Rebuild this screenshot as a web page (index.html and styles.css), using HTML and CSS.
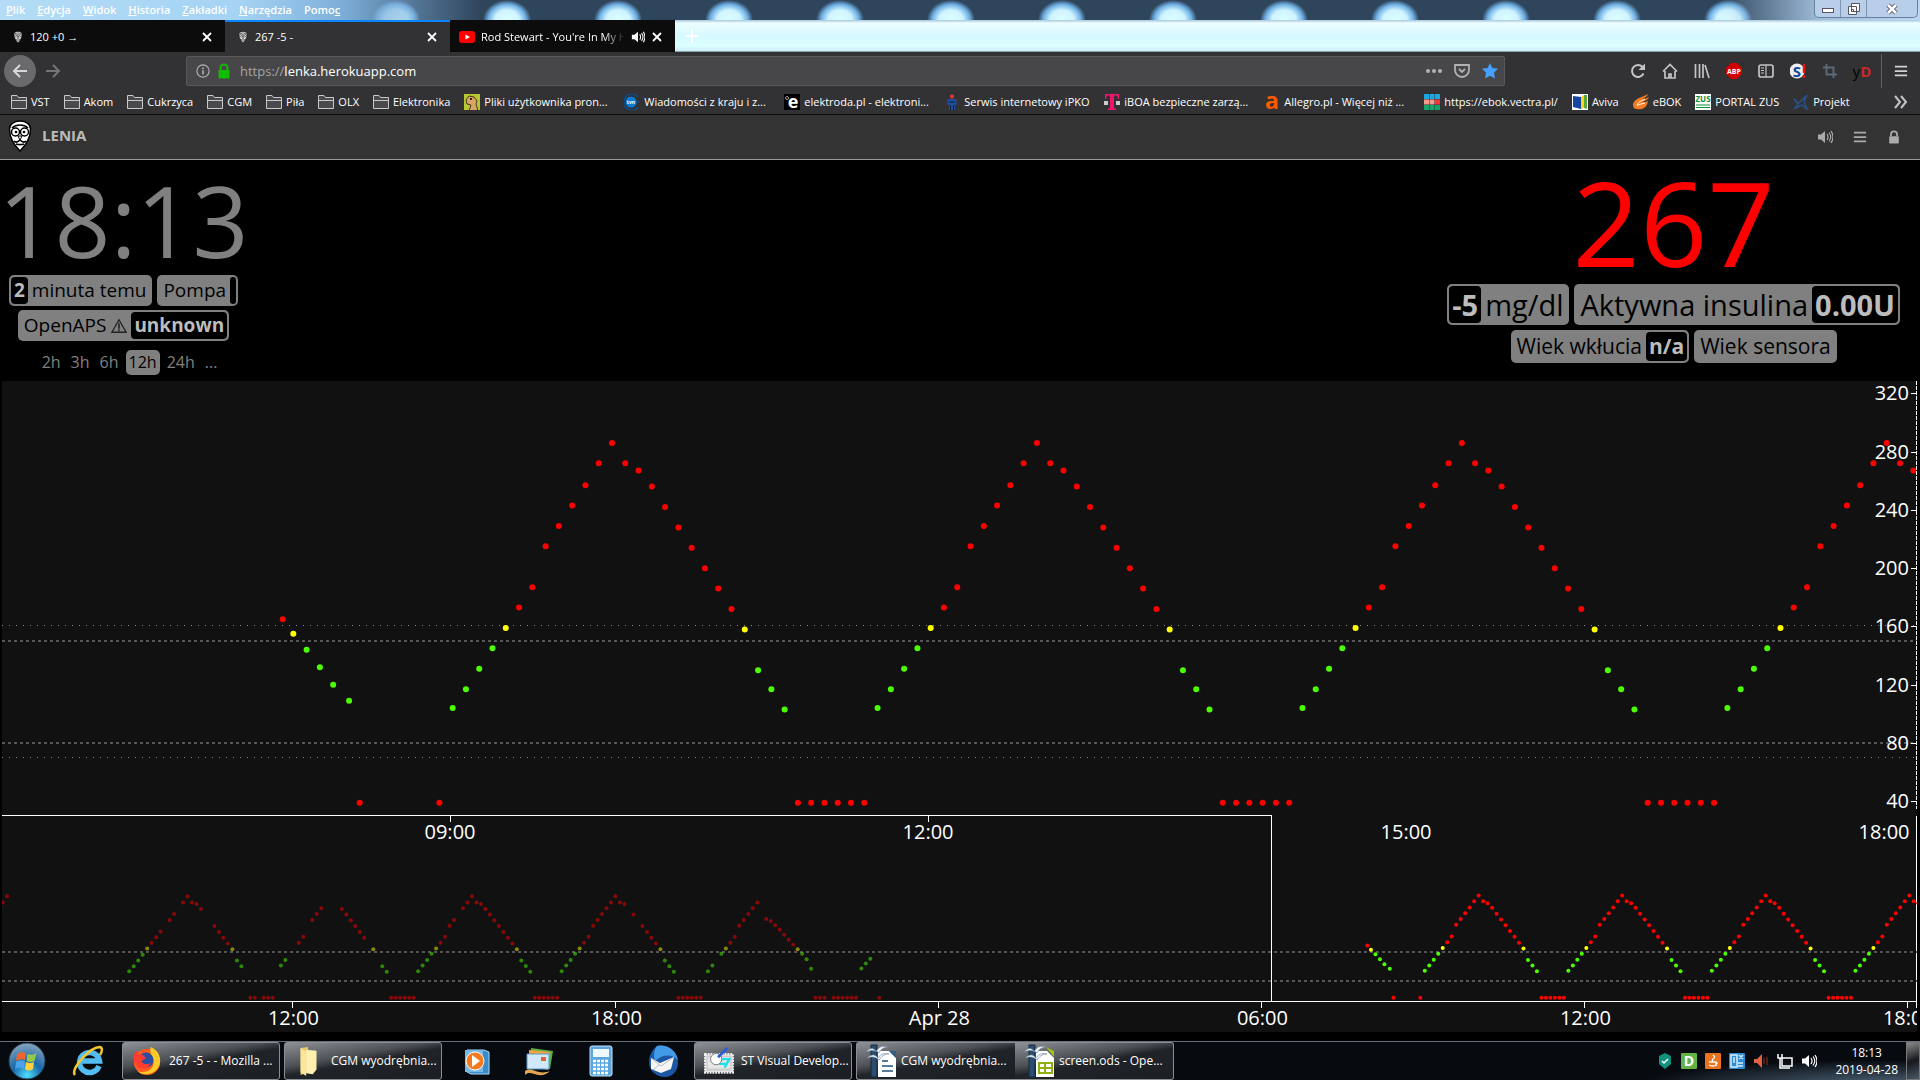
FILE: index.html
```html
<!DOCTYPE html>
<html lang="pl">
<head>
<meta charset="utf-8">
<title>267 -5 -</title>
<link rel="stylesheet" href="styles.css">
</head>
<body>
<svg class="defs" aria-hidden="true">
  <symbol id="folder" viewBox="0 0 16 16"><path d="M.5 14.500V1.500H6l1.500 2h8v11z" fill="#4a4a4e" stroke="#c8c8c8"/><path d="M.5 6.500h15" stroke="#c8c8c8"/></symbol>
  <symbol id="owl" viewBox="0 0 24 32"><path d="M12 1C5.500 1 1.500 4.500 1.500 9c0 8 3.500 15 10.500 22 7-7 10.500-14 10.500-22C22.500 4.500 18.500 1 12 1z" fill="#fff" stroke="#000" stroke-width="1.500"/><path d="M4 8c4-4 12-4 16 0M6 21c2 2 4 1 6-1 2 2 4 3 6 1M8 24c3 1 5 1 8 0" fill="none" stroke="#000" stroke-width="1.600"/><circle cx="7.500" cy="12" r="4" fill="#fff" stroke="#000" stroke-width="1.500"/><circle cx="16.500" cy="12" r="4" fill="#fff" stroke="#000" stroke-width="1.500"/><circle cx="8" cy="12" r="1.300"/><circle cx="16" cy="12" r="1.300"/><path d="M10 16l2 4 2-4z" fill="#fff" stroke="#000"/></symbol>
  <symbol id="close" viewBox="0 0 12 12"><path d="M2 2l8 8M10 2l-8 8" stroke="#fff" stroke-width="1.800"/></symbol>
  <symbol id="sound" viewBox="0 0 16 16"><path d="M1 5.500h3L8 2v12l-4-3.500H1z" fill="currentColor"/><path d="M10 5q2 3 0 6M12 3.500q3.500 4.500 0 9M14 2q4 6 0 12" fill="none" stroke="currentColor" stroke-width="1.200"/></symbol>
  <symbol id="bars" viewBox="0 0 16 16"><path d="M1 3h14M1 8h14M1 13h14" stroke="currentColor" stroke-width="2"/></symbol>
  <symbol id="lock" viewBox="0 0 16 16"><path d="M4.500 7V5a3.500 3.500 0 017 0v2" fill="none" stroke="currentColor" stroke-width="2"/><rect x="2.500" y="7" width="11" height="8.500" rx="1" fill="currentColor"/></symbol>
  <symbol id="office" viewBox="0 0 34 36"><path d="M6 2h6v32H6z" fill="#2c4d70" stroke="#15283c"/><path d="M13 8h11l7 7v19H13z" fill="#fff"/><path d="M1 9c5-6 9-3 10 0 3-7 9-6 12-5-4 0-7 2-9 6-3-3-8-3-13-1zM2 15c5-5 9-3 11 0 3-5 8-5 11-4-5 0-8 3-10 6-3-3-7-4-12-2z" fill="#eef4fa" stroke="#68829b" stroke-width=".6"/></symbol>
</svg>

<header class="titlebar">
  <nav class="menu">
    <button><u>P</u>lik</button><button><u>E</u>dycja</button><button><u>W</u>idok</button><button><u>H</u>istoria</button><button><u>Z</u>akładki</button><button><u>N</u>arzędzia</button><button>Pomo<u>c</u></button>
  </nav>
  <div class="window-buttons">
    <button aria-label="Minimalizuj"><svg width="14" height="10"><rect x="1.500" y="4.500" width="11" height="4" fill="#fff" stroke="#556"/></svg></button>
    <button aria-label="Przywróć"><svg width="14" height="14"><path d="M4.500 1.500h8v8h-8zM1.500 4.500h8v8h-8z" fill="#fff" stroke="#556"/><path d="M4.500 7.500h2v2h-2z" fill="none" stroke="#556"/></svg></button>
    <button class="wide" aria-label="Zamknij"><svg width="14" height="12"><path d="M3 2l8 8M11 2l-8 8" stroke="#556" stroke-width="4.500"/><path d="M3 2l8 8M11 2l-8 8" stroke="#fff" stroke-width="2.500"/></svg></button>
  </div>
</header>

<div class="tabs">
  <div class="tab"><svg class="i12"><use href="#owl"/></svg><span>120 +0 →</span><button aria-label="Zamknij kartę"><svg class="i12"><use href="#close"/></svg></button></div>
  <div class="tab active"><svg class="i12"><use href="#owl"/></svg><span>267 -5 -</span><button aria-label="Zamknij kartę"><svg class="i12"><use href="#close"/></svg></button></div>
  <div class="tab media"><svg class="i16" viewBox="0 0 16 16"><rect y="2" width="16" height="12" rx="3" fill="#f00"/><path d="M6.500 5.500v5L11 8z" fill="#fff"/></svg><span class="fade">Rod Stewart - You're In My Heart</span><svg class="i14"><use href="#sound"/></svg><button aria-label="Zamknij kartę"><svg class="i12"><use href="#close"/></svg></button></div>
  <button class="newtab" aria-label="Nowa karta"><svg width="14" height="14"><path d="M7 0v14M0 7h14" stroke="#fff" stroke-width="2"/></svg></button>
</div>

<div class="toolbar">
  <button class="back" aria-label="Wstecz"><svg class="i16" viewBox="0 0 16 16"><path d="M15 8H2M8 2L2 8l6 6" fill="none" stroke="#d8d8d8" stroke-width="2"/></svg></button>
  <button class="forward" aria-label="Dalej"><svg class="i16" viewBox="0 0 16 16"><path d="M1 8h13M8 2l6 6-6 6" fill="none" stroke="#747476" stroke-width="2"/></svg></button>
  <div class="urlbar">
    <svg class="i14" viewBox="0 0 16 16"><circle cx="8" cy="8" r="7" fill="none" stroke="#b1b1b3" stroke-width="1.300"/><path d="M8 7v5M8 4v2" stroke="#b1b1b3" stroke-width="1.800"/></svg>
    <svg class="i16 green"><use href="#lock"/></svg>
    <label for="url">https://</label><input id="url" value="lenka.herokuapp.com">
    <svg class="i16" viewBox="0 0 16 16"><g fill="#b1b1b3"><circle cx="2" cy="8" r="2"/><circle cx="8" cy="8" r="2"/><circle cx="14" cy="8" r="2"/></g></svg>
    <svg class="i16" viewBox="0 0 16 16"><path d="M1 2h14v5a7 7 0 01-14 0zM5 6l3 3 3-3" fill="none" stroke="#b1b1b3" stroke-width="1.800"/></svg>
    <svg class="i16" viewBox="0 0 16 16"><path d="M8 0l2.400 5 5.600.7-4 3.900 1 5.900-5-2.800-5 2.800 1-5.900-4-3.900L5.600 5z" fill="#45a1ff"/></svg>
  </div>
  <div class="tools">
    <button aria-label="Odśwież"><svg class="i16" viewBox="0 0 16 16"><path d="M13.500 10.500A6 6 0 1112.500 4" fill="none" stroke="#c4c4c6" stroke-width="2"/><path d="M15 .5V7H8.500z" fill="#c4c4c6"/></svg></button>
    <button aria-label="Strona domowa"><svg class="i16" viewBox="0 0 16 16"><path d="M1 8.500L8 1.500l7 7M3 8v7h10V8M7 15v-4h2v4" fill="none" stroke="#c4c4c6" stroke-width="1.700"/></svg></button>
    <button aria-label="Biblioteka"><svg class="i16" viewBox="0 0 16 16"><path d="M1.500 1v14M5.500 1v14M9 1v14M11 2l4 13" stroke="#c4c4c6" stroke-width="1.700"/></svg></button>
    <button aria-label="AdBlock"><svg class="i16" viewBox="0 0 16 16"><path d="M5 0h6l5 5v6l-5 5H5l-5-5V5z" fill="#d00000"/><text x="8" y="11" font-size="7" font-weight="700" text-anchor="middle" fill="#fff">ABP</text></svg></button>
    <button aria-label="Panel boczny"><svg class="i16" viewBox="0 0 16 16"><rect x="1" y="2" width="14" height="12" rx="2" fill="none" stroke="#c4c4c6" stroke-width="1.700"/><path d="M8 2v12M3 5h3M3 7.500h3M3 10h3" stroke="#c4c4c6" stroke-width="1.200"/></svg></button>
    <button aria-label="Dodatek S"><svg class="i16" viewBox="0 0 16 16"><circle cx="7" cy="8" r="7.500" fill="#eee"/><text x="7" y="13.500" font-size="15" font-weight="700" text-anchor="middle" fill="#12459b">S</text><path d="M14 1v9M14 12v3" stroke="#e11" stroke-width="2.500"/></svg></button>
    <button aria-label="Przytnij"><svg class="i14" viewBox="0 0 16 16"><path d="M4 0v12h12M0 4h12v12" fill="none" stroke="#5b6b7a" stroke-width="2.200"/></svg></button>
    <button class="yd" aria-label="yD">y<b>D</b></button>
    <button class="main-menu" aria-label="Menu"><svg class="i14"><use href="#bars"/></svg></button>
  </div>
</div>

<nav class="bookmarks">
  <a href="#"><svg class="i16"><use href="#folder"/></svg>VST</a>
  <a href="#"><svg class="i16"><use href="#folder"/></svg>Akom</a>
  <a href="#"><svg class="i16"><use href="#folder"/></svg>Cukrzyca</a>
  <a href="#"><svg class="i16"><use href="#folder"/></svg>CGM</a>
  <a href="#"><svg class="i16"><use href="#folder"/></svg>Piła</a>
  <a href="#"><svg class="i16"><use href="#folder"/></svg>OLX</a>
  <a href="#"><svg class="i16"><use href="#folder"/></svg>Elektronika</a>
  <a href="#" class="long"><svg class="i16" viewBox="0 0 16 16"><rect width="16" height="16" fill="#b5c832"/><path d="M2 6l3-4 5 1 3 4-1 3 2 7H5l2-6-4-1z" fill="#d9a566" stroke="#4b3417"/><circle cx="7" cy="5" r="1"/></svg>Pliki użytkownika pron...</a>
  <a href="#" class="long"><svg class="i16" viewBox="0 0 16 16"><path d="M14 3a8 8 0 100 10M12 8h4" fill="none" stroke="#0a4d8c" stroke-width="1.500"/><circle cx="7" cy="8" r="5.500" fill="#0b7ad1"/><text x="7" y="10" font-size="5" font-weight="700" text-anchor="middle" fill="#fff">tvn</text></svg>Wiadomości z kraju i z...</a>
  <a href="#" class="long"><svg class="i16" viewBox="0 0 16 16"><rect width="16" height="16"/><text x="9" y="14" font-size="18" font-weight="700" text-anchor="middle" fill="#fff">e</text><circle cx="3" cy="4" r="1.500" fill="none" stroke="#999"/></svg>elektroda.pl - elektroni...</a>
  <a href="#" class="long"><svg class="i16" viewBox="0 0 16 16"><circle cx="8" cy="2.500" r="2" fill="#e33"/><path d="M4 5h8l1 5-2 1v5H5v-5l-2-1z" fill="#1d4f9e"/><path d="M6.500 11v5M9.500 11v5M5 8h6" stroke="#0c1f44"/></svg>Serwis internetowy iPKO</a>
  <a href="#" class="long"><svg class="i16" viewBox="0 0 16 16"><path d="M1 0h14v5h-1l-1-3.500h-3V14l2 1v1H4v-1l2-1V1.500H3L2 5H1z" fill="#f0146e"/><path d="M0 7h4v4H0zM12 7h4v4h-4z" fill="#ccc"/></svg>iBOA bezpieczne zarzą...</a>
  <a href="#" class="long"><svg class="i16" viewBox="0 0 16 16"><text x="8" y="15" font-size="23" font-weight="700" text-anchor="middle" fill="#ff5a00">a</text></svg>Allegro.pl - Więcej niż ...</a>
  <a href="#"><svg class="i16" viewBox="0 0 16 16"><path d="M0 0h5v5H0zM5.500 0h5v5h-5zM11 0h5v5h-5z" fill="#1aa7e0"/><path d="M0 5.500h5v5H0zM5.500 5.500h5v5h-5z" fill="#f4998d"/><path d="M11 5.500h5v5h-5z" fill="#f33"/><path d="M0 11h5v5H0zM5.500 11h5v5h-5zM11 11h5v5h-5z" fill="#14a36b"/></svg>https://ebok.vectra.pl/</a>
  <a href="#"><svg class="i16" viewBox="0 0 16 16"><rect width="16" height="16" fill="#fff"/><path d="M1 2l8 1v12l-8-2z" fill="#1546a0"/><path d="M9 3l3-2v13l-3 1z" fill="#ffd51c"/><path d="M12 1h3v14l-3-1z" fill="#5ba83c"/></svg>Aviva</a>
  <a href="#"><svg class="i16" viewBox="0 0 16 16"><path d="M0 10C2 4 8 4 15 0c-1 3-4 4-6 5 3 0 5-1 7-2-1 3-4 4-7 5 2 0 4 0 6-1-1 7-6 9-11 8-3 0-4-2-4-5z" fill="#f47b20"/><path d="M4 11c2-4 5-4 8-6M4 12c2-2 5-2 8-3" stroke="#fff" fill="none"/></svg>eBOK</a>
  <a href="#"><svg class="i16" viewBox="0 0 16 16"><rect width="16" height="16" fill="#fff"/><text x="8" y="8" font-size="8" font-weight="700" text-anchor="middle" fill="#0a8f3a">ZUS</text><path d="M1 11h14M1 13.500h14" stroke="#0a8f3a"/></svg>PORTAL ZUS</a>
  <a href="#"><svg class="i16" viewBox="0 0 16 16"><path d="M1 5l4 4 3-2 6-6-3 6 3 8-5-4-7 3 3-4z" fill="none" stroke="#27528c" stroke-width="1.500"/></svg>Projekt</a>
  <button class="overflow" aria-label="Więcej zakładek"><svg class="i14" viewBox="0 0 14 14"><path d="M1 1l5 6-5 6M7 1l5 6-5 6" fill="none" stroke="#c4c4c6" stroke-width="2"/></svg></button>
</nav>

<div class="site-header">
  <svg class="logo"><use href="#owl"/></svg>
  <h1>LENIA</h1>
  <div class="site-tools">
    <button aria-label="Alarm"><svg class="i16"><use href="#sound"/></svg></button>
    <button aria-label="Ustawienia"><svg class="i14"><use href="#bars"/></svg></button>
    <button aria-label="Logowanie"><svg class="i14"><use href="#lock"/></svg></button>
  </div>
</div>

<main>
  <section class="status">
    <div class="left">
      <div class="clock">18:13</div>
      <div class="row"><span class="pill"><b>2</b><i>minuta temu</i></span><span class="pill"><i>Pompa</i><b class="empty"></b></span></div>
      <div class="row"><span class="pill"><i>OpenAPS <svg class="i16" viewBox="0 0 18 16"><path d="M9 1l8 14H1z" fill="none" stroke="#222" stroke-width="1.500"/><path d="M9 5v6M9 12v2" stroke="#222" stroke-width="1.800"/></svg></i><b>unknown</b></span></div>
      <div class="hours"><button>2h</button><button>3h</button><button>6h</button><button class="selected">12h</button><button>24h</button><button>...</button></div>
    </div>
    <div class="right">
      <div class="bg">267</div>
      <div class="row big"><span class="pill"><b>-5</b><i>mg/dl</i></span><span class="pill"><i>Aktywna insulina</i><b>0.00U</b></span></div>
      <div class="row mid"><span class="pill"><i>Wiek wkłucia</i><b>n/a</b></span><span class="pill"><i>Wiek sensora</i></span></div>
    </div>
  </section>
  <svg id="chart" class="chart" role="img" aria-label="Wykres glikemii"></svg>
</main>

<footer class="taskbar">
  <button class="orb" aria-label="Start"><svg viewBox="0 0 38 38"><defs><radialGradient id="orb" cx=".5" cy=".9" r=".9"><stop offset="0" stop-color="#4fe0ff"/><stop offset=".45" stop-color="#1768a8"/><stop offset="1" stop-color="#8aa5bd"/></radialGradient></defs><circle cx="19" cy="19" r="18" fill="url(#orb)" stroke="#25384c"/><path d="M9 12q4-3 9-1l-1 7q-5-2-9 1z" fill="#f0652f"/><path d="M19.500 12q5 2 9-1l-2 8q-4 2-8 0z" fill="#94c94a"/><path d="M8 20q4-3 9-1l-1 8q-4-3-9 0z" fill="#4aa3e8"/><path d="M18 20q4 2 8 0l-1 7q-4 3-8 0z" fill="#ffd23c"/></svg></button>
  <button class="launch ie" aria-label="Internet Explorer"><svg viewBox="0 0 32 32"><path d="M27 21a10 10 0 11.500-5H8" fill="none" stroke="#52bdf3" stroke-width="5.500"/><path d="M3 30C-2 24 18 2 28 2c3 1 2 5 0 8" fill="none" stroke="#f6c62a" stroke-width="2.500"/></svg></button>
  <button class="task"><svg viewBox="0 0 32 32"><circle cx="16" cy="17" r="14" fill="#ff5a1f"/><path d="M20 1c9 4 12 13 9 20-4 9-16 12-23 6 10 3 18-3 17-11-1-6-5-8-3-15z" fill="#ffc928"/><circle cx="15" cy="15" r="8" fill="#2b4ea0"/><path d="M2 9l3-4 2 4c4-1 6 2 8 4l-5 3c2 4 7 4 10 2-2 6-10 8-15 3C2 18 1 13 2 9z" fill="#ff3d2e"/></svg><span>267 -5 - - Mozilla ...</span></button>
  <button class="task"><svg viewBox="0 0 32 32"><path d="M7 2l8-1v27l-8 3z" fill="#e9c865"/><path d="M13 4l11 1v20l-4 5-7-1z" fill="#fff0b0"/><path d="M7 2l6 4v26l-6-4z" fill="#f8e5a0"/></svg><span>CGM wyodrębnia...</span></button>
  <button class="launch" aria-label="Media Player"><svg viewBox="0 0 32 32"><path d="M6 5h17l5 2v22H10l-4-2z" fill="#3c8bc9" stroke="#a9dbff"/><path d="M4 5h18v22H4z" fill="#78b8e5"/><circle cx="14" cy="16" r="9" fill="#f47a1c" stroke="#fff"/><path d="M11 10v12l8-6z" fill="#fff"/></svg></button>
  <button class="launch" aria-label="Poczta"><svg viewBox="0 0 32 32"><path d="M8 3l22 3-3 18-20-4z" fill="#5dae45"/><path d="M6 5l21 2-2 18-19-4z" fill="#f4a343"/><path d="M4 9h22v15H4z" fill="#cfe9fa" stroke="#5499cb"/><path d="M18 12h5v4h-5z" fill="#d63"/><path d="M2 26c8-5 12 5 25 0-6 6-12 4-16 3-3-1-6-2-9 1z" fill="#e3a552"/></svg></button>
  <button class="launch" aria-label="Kalkulator"><svg viewBox="0 0 32 32"><rect x="5" y="1" width="22" height="30" rx="2" fill="#5da6dc" stroke="#c6e7ff"/><rect x="8" y="4" width="16" height="8" fill="#eef8ff"/><path d="M8 16h16M8 20h16M8 24h16M8 28h16" stroke="#fff" stroke-width="2.500" stroke-dasharray="3 1"/></svg></button>
  <button class="launch" aria-label="Thunderbird"><svg viewBox="0 0 32 32"><path d="M10 1c12-2 21 6 21 17 0 8-6 14-13 14C8 32 2 25 2 17 2 10 5 5 10 1z" fill="#1c57a5"/><path d="M10 1c10-2 19 4 21 14-6-6-15-6-23 1-2-5-1-11 2-15z" fill="#419be6"/><path d="M4 13l9 5 14-6-3 12-10 4-10-4z" fill="#f5f5f2"/><path d="M4 13l10 8 13-9M12 20l-6 5" stroke="#b6bec8" fill="none"/></svg></button>
  <button class="task"><svg viewBox="0 0 32 32"><path d="M1 9h30v19H1z" fill="#ccc" stroke="#eee" stroke-width="3" stroke-dasharray="2 1"/><path d="M4 12h24v12H4z" fill="#e6e6e6"/><path d="M18 14h9l-5 9M16 19h8" stroke="#1de0e8" stroke-width="2.500" fill="none"/><circle cx="13" cy="14" r="6" fill="#fff" stroke="#777"/><path d="M15 12L25 2" stroke="#2a5ce0" stroke-width="3"/></svg><span>ST Visual Develop...</span></button>
  <div class="group">
    <button class="task"><svg viewBox="0 0 34 36"><use href="#office"/><path d="M17 18h6M17 23h11M17 28h11" stroke="#547d9d" stroke-width="2"/><path d="M24 8l7 7V8z" fill="#315c83"/></svg><span>CGM wyodrębnia...</span></button>
    <button class="task"><svg viewBox="0 0 34 36"><use href="#office"/><path d="M16 20h13v10H16zM16 25h13M22 20v10" fill="none" stroke="#8fae10" stroke-width="2"/><path d="M23 4l8 10V8z" fill="#a2c410"/></svg><span>screen.ods - Ope...</span></button>
  </div>
  <div class="tray">
    <svg class="i16" viewBox="0 0 16 16"><path d="M8 0l6 3v8l-6 5-6-5V3z" fill="#12917e"/><path d="M5 8l2 2 4-4" fill="none" stroke="#fff" stroke-width="1.500"/></svg>
    <svg class="i16" viewBox="0 0 16 16"><rect width="16" height="16" rx="1" fill="#62b246"/><text x="8" y="13" font-size="14" font-weight="700" text-anchor="middle" fill="#fff">D</text></svg>
    <svg class="i16" viewBox="0 0 16 16"><rect width="16" height="16" rx="1" fill="#e9731e"/><path d="M8 2q3 2 0 4q-2 2 1 3M4 9h7q3 2-1 2M4 12q4 2 8 0" fill="none" stroke="#fff" stroke-width="1.300"/></svg>
    <svg class="i16" viewBox="0 0 16 16"><rect width="16" height="16" rx="1" fill="#2c8bd5"/><path d="M2 2h6v12H2zM10 2l4 4M14 2l-4 4M5 4v6M9 10h5M9 13h5" fill="none" stroke="#d5efff" stroke-width="1.500"/></svg>
    <svg class="i16" viewBox="0 0 16 16"><path d="M1 6h3l5-5v14l-5-5H1z" fill="#e06042"/><path d="M11 5v6M14 4v8" stroke="#69261c" stroke-width="1.500"/></svg>
    <svg class="i16" viewBox="0 0 16 16"><path d="M5 5h10v8H5zM7 15h6M1 1v4h4V1M3 5v10h4" fill="none" stroke="#fff" stroke-width="1.500"/></svg>
    <svg class="i16 white"><use href="#sound"/></svg>
    <time>18:13<br>2019-04-28</time>
  </div>
  <button class="desktop" aria-label="Pokaż pulpit"></button>
</footer>
<script src="chart.js"></script>
</body>
</html>
```

FILE: styles.css
```css
* { box-sizing: border-box; }
body {
  margin: 0;
  min-height: 100vh;
  display: flex;
  flex-direction: column;
  background: #000;
  color: #fff;
  font: 12px/16px "Open Sans", "Noto Sans", sans-serif;
}
button { margin: 0; padding: 0; border: 0; background: none; color: inherit; font: inherit; display: flex; align-items: center; justify-content: center; }
a { color: inherit; text-decoration: none; }
svg { flex: none; }
.defs { position: absolute; width: 0; height: 0; }
.i12 { width: 12px; height: 12px; }
.i14 { width: 14px; height: 14px; }
.i16 { width: 16px; height: 16px; }
.green { color: #12bc00; }
.white { color: #fff; }

.titlebar {
  height: 20px;
  display: flex;
  justify-content: space-between;
  background:
    linear-gradient(90deg, #b4dcf6 0, #a5d3f4 240px, #7fb0da 340px, rgba(60,90,120,0) 480px),
    linear-gradient(270deg, #bcd7f3 0, #9fbcd9 100px, rgba(60,90,120,0) 200px),
    radial-gradient(ellipse 24px 20px at 56px 20px, #dff 0, #cff4ff 50%, #6fb0e4 78%, rgba(47,69,92,0) 100%) 7px 0 / 111px 20px,
    #2f455c;
}
.menu { display: flex; gap: 12px; padding: 0 6px; font-size: 11px; font-weight: 600; text-shadow: 0 0 4px #fff; }
.window-buttons { display: flex; width: 104px; height: 18px; margin-right: 2px; background: #b9cfe9; border: 1px solid #67809b; border-top: 0; border-radius: 0 0 5px 5px; }
.window-buttons button { flex: 1; border-right: 1px solid #7e98b4; }
.window-buttons .wide { flex: 2; border: 0; }

.tabs { height: 32px; display: flex; background: linear-gradient(#a9c6dc 0, #ecfeff 3px, #d6f9ff 16px, #dcffff 26px, #cfeef5); border-bottom: 1px solid #8aa4ab; }
.tab { width: 225px; height: 32px; display: flex; align-items: center; gap: 6px; padding: 2px 12px 0; background: #0c0c0d; font-size: 11px; }
.tab span { flex: 1; white-space: nowrap; overflow: hidden; }
.tab.active { background: #323234; border-top: 2px solid #0a84ff; padding-top: 0; }
.tab.media { padding: 2px 12px 0 9px; }
.fade { -webkit-mask-image: linear-gradient(90deg, #000 85%, transparent); mask-image: linear-gradient(90deg, #000 85%, transparent); }
.newtab { width: 34px; }

.toolbar { height: 38px; display: flex; align-items: center; background: #323234; padding-left: 4px; }
.back { width: 32px; height: 32px; border-radius: 50%; background: #6a6a6c; }
.forward { width: 34px; }
.urlbar { flex: 1; height: 30px; margin-left: 116px; display: flex; align-items: center; gap: 12px; padding: 0 6px 0 9px; background: #474749; border: 1px solid #59595c; border-radius: 2px; font-size: 13px; }
.urlbar .green { margin: 0 -4px 0 -6px; }
.urlbar label { color: #a4a4a8; margin-right: -12px; }
.urlbar input { flex: 1; padding: 0; border: 0; background: none; color: #fff; font: inherit; outline: none; }
.tools { display: flex; margin-left: 117px; height: 34px; }
.tools button { width: 32px; }
.tools .main-menu { width: 39px; margin-left: 3px; border-left: 1px solid #606063; color: #d0d0d2; }
.tools .yd { font-size: 15px; color: #000; }
.yd b { color: #c62828; }

.bookmarks { height: 25px; display: flex; align-items: center; gap: 14px; padding: 0 12px 0 11px; background: #323234; border-bottom: 1px solid #0c0c0d; font-size: 11px; }
.bookmarks a { display: flex; align-items: center; gap: 4px; white-space: nowrap; }
.bookmarks .long { width: 146px; }
.overflow { margin-left: auto; }

.site-header { height: 45px; display: flex; align-items: center; gap: 10px; padding: 0 19px 0 8px; background: #333; border-bottom: 1px solid #999; color: #bbb; }
.logo { width: 24px; height: 32px; margin-bottom: 2px; }
h1 { margin: 0 0 4px; font-size: 15px; line-height: 20px; font-weight: 700; }
.site-tools { margin-left: auto; display: flex; gap: 20px; color: #aaa; }

main { flex: 1; display: flex; flex-direction: column; padding: 0 3px 9px 2px; }
.status { height: 221px; display: flex; justify-content: space-between; color: #808080; }
.left { width: 243px; padding: 10px 0 0; display: flex; flex-direction: column; align-items: center; gap: 4px; }
.clock { font-size: 98px; line-height: 101px; }
.row { display: flex; gap: 5px; font-size: 19px; line-height: 27px; white-space: nowrap; }
.pill { display: flex; padding: 2px; background: #808080; border-radius: 5px; }
.pill i { font-style: normal; color: #000; padding: 0 4px; }
.pill svg { vertical-align: -2px; }
.pill b { background: #000; color: #bdbdbd; border-radius: 4px; padding: 0 3px; font-weight: 700; }
.pill .empty { width: 6px; padding: 0; }
.hours { display: flex; gap: 4px; margin: 5px 0 0 12px; font-size: 16px; line-height: 25px; }
.hours button { padding: 0 3px; }
.hours .selected { background: #808080; color: #000; border-radius: 5px; }
.right { padding: 4px 17px 0 0; display: flex; flex-direction: column; align-items: center; gap: 5px; }
.bg { font-size: 118px; line-height: 115px; color: #f00; }
.row.big { font-size: 29px; line-height: 37px; }
.row.mid { font-size: 21px; line-height: 29px; }

.chart { flex: 1 1 0; min-height: 400px; width: 100%; background: #111; overflow: hidden; font-size: 20px; fill: #fff; }
.axis { stroke: #fff; fill: none; }
.tick { stroke: #fff; }
.target { stroke: #555; stroke-width: 2; stroke-dasharray: 3 3; }
.limit { stroke: #888; stroke-dasharray: 1 6; }
.brush { fill: #111; stroke: #fff; }
.high { fill: #f00; }
.warn { fill: #ff0; }
.ok { fill: #4cff00; }
.past { opacity: .5; }

.taskbar { height: 39px; display: flex; border-top: 1px solid #66707a; background: radial-gradient(ellipse 240px 24px at 1880px 42px, #4c6074, transparent), #070b10; }
.orb { width: 54px; }
.orb svg { width: 38px; height: 38px; }
.launch { width: 62px; }
.launch svg { width: 32px; height: 32px; }
.launch.ie { width: 68px; }
.task { width: 158px; justify-content: flex-start; gap: 7px; padding-left: 9px; border: 1px solid #8b8f94; border-radius: 3px; background: linear-gradient(170deg, #8d9094 0, #4d5155 38%, #202428 52%, #1b1f23); margin-right: 4px; white-space: nowrap; }
.task svg { width: 30px; height: 32px; }
.group { display: flex; }
.group .task { width: 159px; margin: 0; padding-left: 8px; gap: 2px; }
.group .task svg { width: 34px; height: 36px; }
.group .task:first-child { border-right: 0; border-radius: 3px 0 0 3px; }
.group .task:last-child { border-left: 0; border-radius: 0 3px 3px 0; }
.tray { margin-left: auto; display: flex; align-items: center; gap: 8px; padding-right: 8px; }
.tray time { margin-left: 10px; text-align: center; line-height: 17px; }
.desktop { width: 14px; border: 1px solid #777; background: linear-gradient(160deg, #8a8a8a, #15181c 50%, #4a5865); }
```

FILE: chart.js
```js
const svg = document.getElementById("chart");

// One reading every five minutes; null marks a missing reading.
const low = [39, 39, 39, 39, 39, 39];
const cycle = [104, 117, 131, 145, 159, 173, 187, 215, 229, 243, 257, 272, 286, 272, 267, 256,
  242, 228, 214, 200, 186, 172, 158, 130, 117, 103, ...low];

// Start of each run in minutes from midnight, April 28.
const past = [
  [-1044, [269, 284]],
  [-903, [103, 115, 129, 143, 158, 171, 185, 199, null, 227, 241, null, 269, 284, 269, 265, 253, null, null,
    212, 198, 184, 170, 156, 129, 115, null, 39, 39, null, 39, 39, 39]],
  [-734, [117, 130, null, null, 172, 186, null, 227, 241, 255]],
  [-666, [253, 240, 226, 212, 198, 184, null, 156, null, 115, 102, ...low]],
  [-581, [103, 117, 130, 145, 158, 172, 186, 213, 227, null, 255, 269, 284, 269, 265, 253, 240, 226, 212, 198,
    184, 170, 156, 129, 116, 102, ...low]],
  [-421, [103, 117, 130, 145, 158, 172, 186, 213, 227, 241, 255, 269, 284, 269, 265, null, 240, null, 212, 198,
    184, 170, 156, 129, 115, 102, ...low]],
  [-258, [103, 117, null, 145, 158, 172, 186, 213, 227, 241, 255, 269, null, 229, 224, 214, 203, 191, 179, 167,
    156, 145, 132, 109, 39, 39, 39, null, ...low]],
  [-87, [110, 122, 133, null, 39]]
];
const recent = [
  [477, [165]], [481, [155]], [486, [144, 132, 120]], [502, [109]], [506, [39]], [536, [39]],
  [541, cycle], [701, cycle], [861, cycle], [1021, cycle.slice(0, 15)]
];

function el(name, attrs, text) {
  const node = document.createElementNS("http://www.w3.org/2000/svg", name);
  for (const key in attrs) node.setAttribute(key, attrs[key]);
  if (text) node.textContent = text;
  svg.appendChild(node);
}

function plot(runs, x, y, r, extra) {
  for (const [start, values] of runs) {
    values.forEach((value, i) => {
      if (value === null) return;
      const level = value > 160 || value < 70 ? "high" : value > 150 ? "warn" : "ok";
      el("circle", { cx: x(start + i * 5), cy: y(value), r, class: level + extra });
    });
  }
}

function draw() {
  svg.textContent = "";
  const w = svg.clientWidth;
  const h = svg.clientHeight;
  const focus = Math.round(h * 2 / 3);
  const base = h - 31;
  const x = t => (t - 371.3) / 721.1 * w;
  const y = v => (328.5 - v) / 297.9 * focus;
  const cx = t => (t + 1044.8) / 2134.4 * w;
  const cy = v => focus + (480 - v) / 448.7 * (base - focus);
  const left = Math.floor(cx(371.3)) - .5;

  for (const v of [160, 70]) el("line", { x1: 0, x2: w, y1: Math.round(y(v)) - .5, y2: Math.round(y(v)) - .5, class: "limit" });
  for (const v of [150, 80]) el("line", { x1: 0, x2: w, y1: Math.round(y(v)), y2: Math.round(y(v)), class: "target" });

  for (const t of [540, 720]) el("path", { d: `M${Math.round(x(t)) + .5} ${focus}v7`, class: "tick" });
  el("rect", { x: left, y: focus + .5, width: w, height: base - focus, class: "brush" });
  el("path", { d: `M${left + .5} ${focus + .5}H${w}`, stroke: "#111" });
  el("path", { d: `M0 ${focus + .5}H${left + .5}`, class: "axis" });
  [[540, "09:00"], [720, "12:00"], [900, "15:00"], [1080, "18:00"]].forEach(([t, label]) =>
    el("text", { x: x(t), y: focus + 24, "text-anchor": "middle" }, label));

  for (let v = 40; v <= 320; v += 40) {
    el("text", { x: w - 8, y: y(v) + 7, "text-anchor": "end" }, String(v));
    el("path", { d: `M${w - 6} ${Math.round(y(v)) + .5}h6`, class: "tick" });
  }
  el("path", { d: `M${w - .5} 0V${focus - 6}`, class: "tick", "stroke-dasharray": "4 1" });
  el("path", { d: `M${w - .5} ${focus + 1}V${base + 7}`, class: "tick" });

  for (const v of [150, 80]) el("line", { x1: 0, x2: w, y1: Math.round(cy(v)), y2: Math.round(cy(v)), class: "target" });
  el("path", { d: `M0 ${base + .5}H${w}`, class: "axis" });
  [[-720, "12:00"], [-360, "18:00"], [0, "Apr 28"], [360, "06:00"], [720, "12:00"], [1080, "18:00"]].forEach(([t, label]) => {
    el("path", { d: `M${Math.round(cx(t)) - .5} ${base}v7`, class: "tick" });
    el("text", { x: cx(t), y: base + 24, "text-anchor": "middle" }, label);
  });

  plot(recent, x, y, 3, "");
  plot(past, cx, cy, 2, " past");
  plot(recent, cx, cy, 2, "");
}

draw();
addEventListener("resize", draw);
```
